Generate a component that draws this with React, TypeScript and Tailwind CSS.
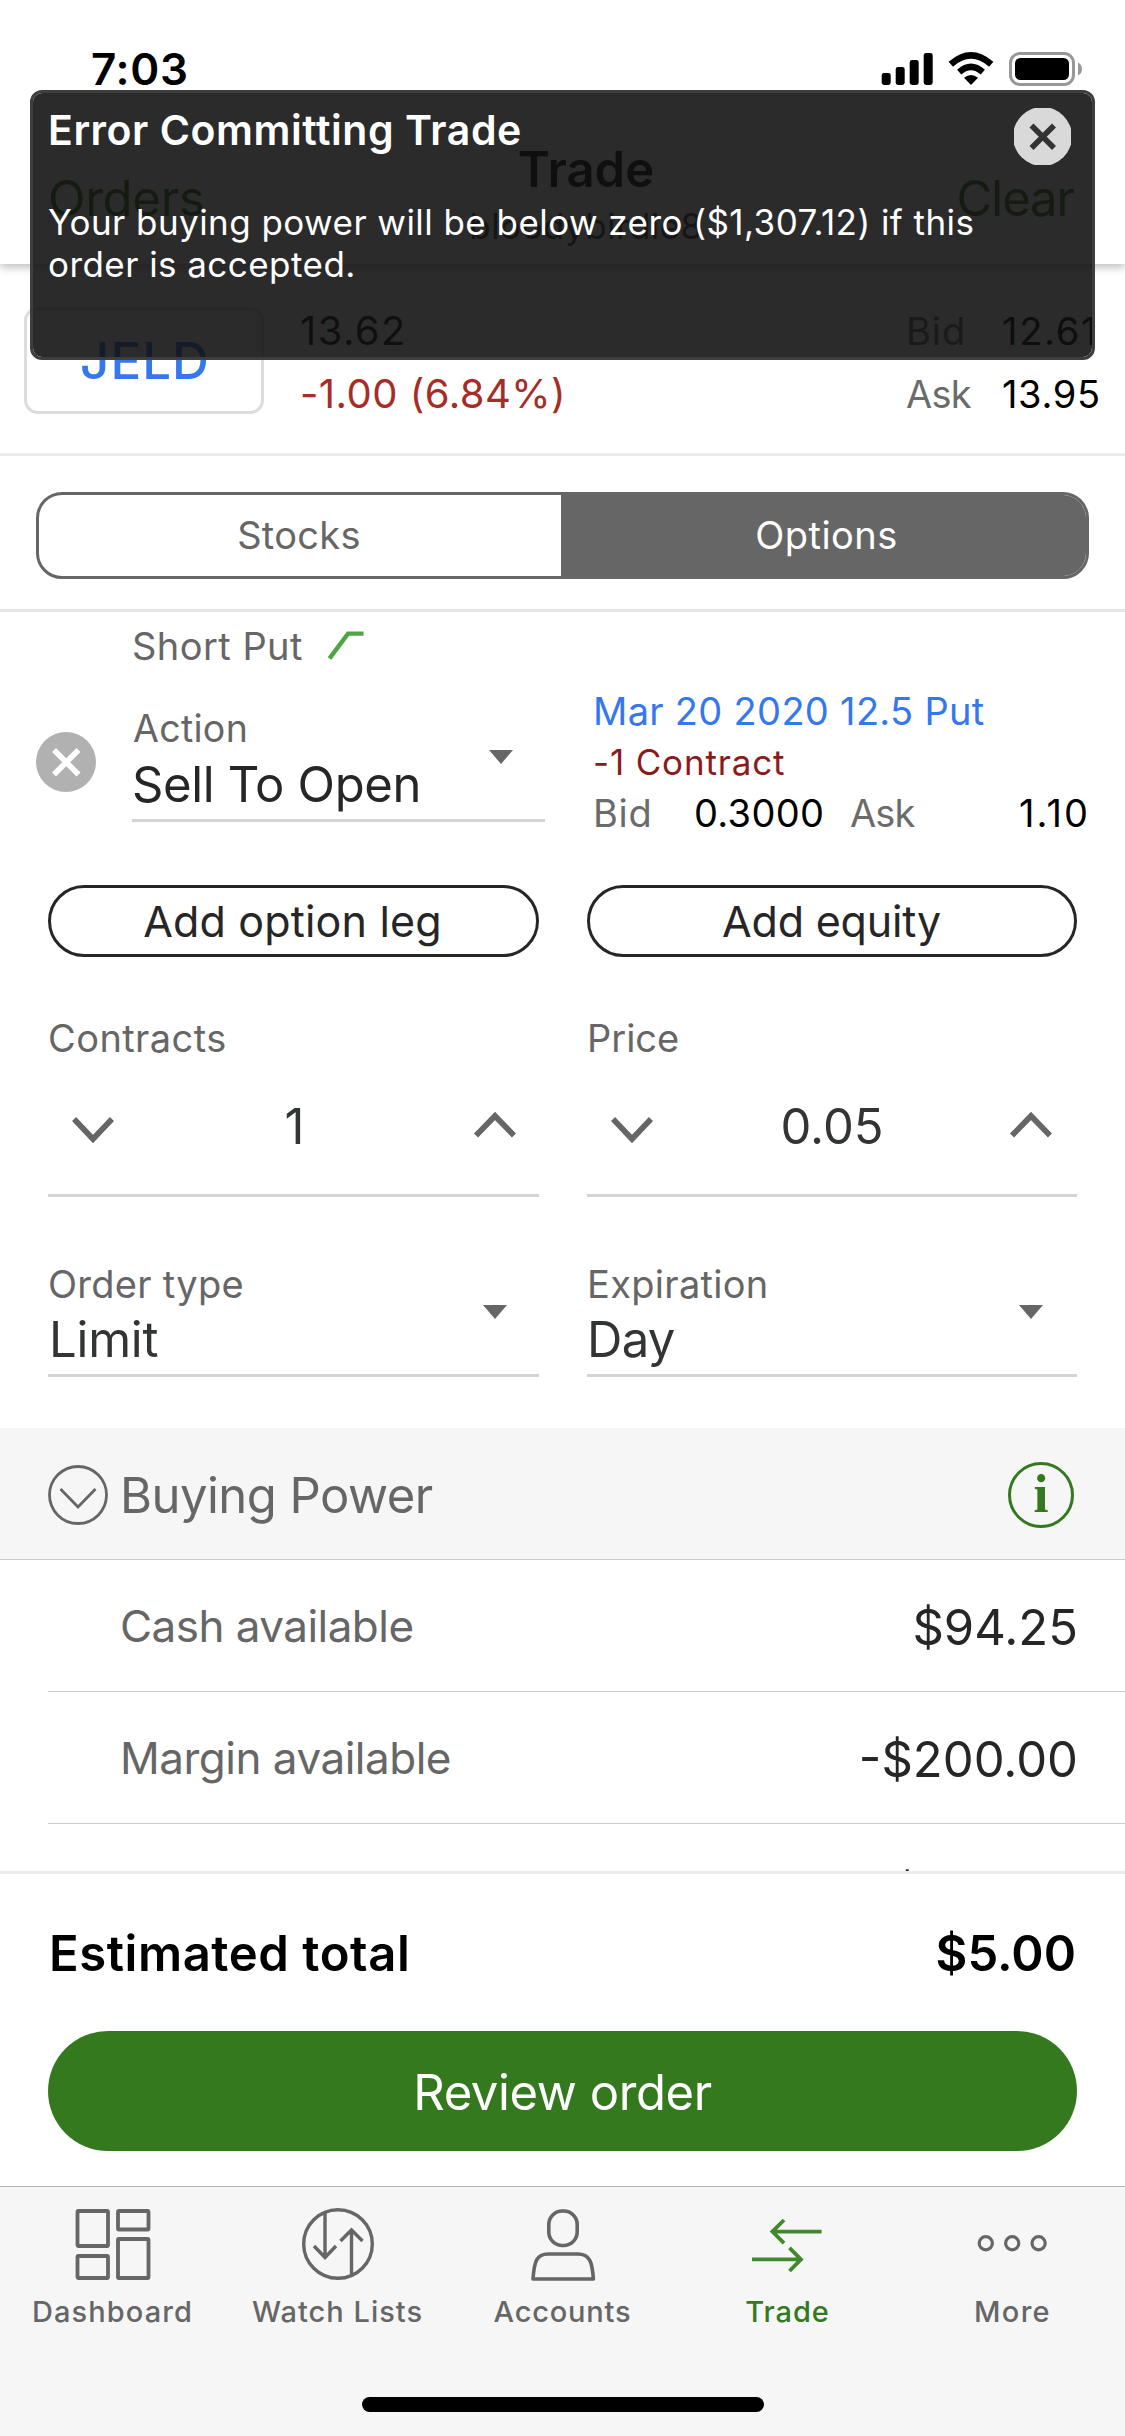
import type { ReactNode } from 'react';

function StatusIcons() {
  return (
    <svg width="202" height="36" viewBox="881 51 202 36" className="mt-[51px]">
      <rect x="881.7" y="73" width="9" height="12" rx="2.4" />
      <rect x="895.7" y="67" width="9" height="18" rx="2.4" />
      <rect x="909.7" y="60" width="9" height="25" rx="2.4" />
      <rect x="923.7" y="53" width="9" height="32" rx="2.4" />
      <path d="M971 85 L964 77.8 Q971 72.2 978 77.8 Z" />
      <path d="M959.2 72.2 Q971 61.5 982.8 72.2" fill="none" stroke="black" strokeWidth="6.4" />
      <path d="M950.8 64.2 Q971 46.6 991.2 64.2" fill="none" stroke="black" strokeWidth="6.6" />
      <rect x="1010.5" y="53.5" width="63" height="31" rx="9.5" fill="none" stroke="#989898" strokeWidth="3" />
      <rect x="1015" y="58" width="54" height="22" rx="5.5" />
      <path d="M1078 62.5 Q1082 64.5 1082 69 Q1082 73.5 1078 75.5 Z" fill="#989898" />
    </svg>
  );
}

function Header() {
  return (
    <header className="relative z-10 flex h-[264px] flex-col bg-white shadow-[0_3px_9px_rgba(0,0,0,0.28)]">
      <div className="flex h-[132px] justify-between pl-[91px] pr-[42px]">
        <span className="mt-[47px] text-[44px] font-semibold leading-none tracking-[0.015em] text-black">7:03</span>
        <StatusIcons />
      </div>
      <div className="flex justify-between pl-[48px] pr-[51px]">
        <span className="mt-[42px] w-[259px] text-[49px] leading-none tracking-[-0.005em] text-[#35791f]">Orders</span>
        <div className="mt-[13px] flex flex-col items-center leading-none">
          <span className="text-[49px] font-semibold text-[#111]">Trade</span>
          <span className="mt-[15px] text-[35px] tracking-[0.012em] text-[#444]">bloodybirdie8</span>
        </div>
        <span className="mt-[42px] w-[209px] text-right text-[49px] leading-none tracking-[-0.0215em] text-[#35791f]">
          Clear
        </span>
      </div>
    </header>
  );
}

function Quote() {
  return (
    <section className="flex h-[192px] items-start border-b-[3px] border-[#ebebeb] pl-[24px] leading-none">
      <button className="mt-[43px] flex h-[107px] w-[240px] justify-center rounded-[14px] border-[3px] border-[#dcdcdc] pl-[2px] pt-[25px] text-[51px] font-medium leading-none tracking-[0.02em] text-[#3577ee]">
        JELD
      </button>
      <div className="ml-[36px] mt-[47px] flex flex-1 flex-col gap-[23px] text-[40px]">
        <span className="tracking-[0.035em] text-[#111]">13.62</span>
        <span className="tracking-[0.0116em] text-[#a82c26]">-1.00 (6.84%)</span>
      </div>
      <div className="mt-[48px] grid w-[219px] grid-cols-[96px_1fr] gap-y-[25px] text-[38px]">
        <span className="tracking-[0.025em] text-[#6b6b6b]">Bid</span>
        <span className="tracking-[0.045em] text-black">12.61</span>
        <span className="tracking-[-0.02em] text-[#6b6b6b]">Ask</span>
        <span className="tracking-[0.0176em] text-black">13.95</span>
      </div>
    </section>
  );
}

function Segmented() {
  return (
    <section className="h-[156px] border-b-[3px] border-[#e6e6e6] px-[36px] pt-[36px]">
      <div className="flex h-[87px] overflow-hidden rounded-[26px] border-[3px] border-[#666] text-[38px]">
        <button className="w-[522px] pr-[2px] tracking-[0.008em] text-[#666]">Stocks</button>
        <button className="flex-1 bg-[#666] pl-[6px] tracking-[0.012em] text-white">Options</button>
      </div>
    </section>
  );
}

function Caret() {
  return (
    <svg width="24" height="14" viewBox="0 0 24 14" className="mt-[40px] shrink-0" fill="#666">
      <path d="M0 0H24L12 14Z" />
    </svg>
  );
}

function SelectField({ label, value, className }: { label: ReactNode; value: ReactNode; className: string }) {
  return (
    <div className={`flex h-[112px] justify-between border-b-[3px] border-[#d4d4d4] leading-none ${className}`}>
      <div className="flex flex-col gap-[12px]">
        {label}
        {value}
      </div>
      <Caret />
    </div>
  );
}

function OptionLeg() {
  return (
    <div className="flex items-start pl-[36px] leading-none">
      <svg width="60" height="60" viewBox="0 0 60 60" className="mt-[40px]">
        <circle cx="30" cy="30" r="30" fill="#b1b1b1" />
        <path d="M18 18L42.5 42.5M42.5 18L18 42.5" stroke="white" strokeWidth="5.6" />
      </svg>
      <SelectField
        className="ml-[36px] mt-[18px] w-[413px] pr-[32px]"
        label={<span className="ml-[1px] h-[38px] text-[37.5px] leading-none tracking-[0.008em] text-[#666]">Action</span>}
        value={<span className="text-[49px] leading-none tracking-[-0.0075em] text-[#262626]">Sell To Open</span>}
      />
      <div className="ml-[48px] flex w-[520px] flex-col">
        <span className="text-[38px] leading-none tracking-[0.008em] text-[#3577ee]">Mar 20 2020 12.5 Put</span>
        <span className="mt-[15px] text-[35px] leading-none tracking-[0.024em] text-[#8b1a1a]">-1 Contract</span>
        <div className="mt-[14px] flex text-[38px] leading-none">
          <span className="w-[101px] tracking-[0.019em] text-[#6b6b6b]">Bid</span>
          <span className="w-[156px] tracking-[0.0087em] text-black">0.3000</span>
          <span className="w-[169px] tracking-[-0.025em] text-[#6b6b6b]">Ask</span>
          <span className="tracking-[0.056em] text-black">1.10</span>
        </div>
      </div>
    </div>
  );
}

function Stepper({ value, className }: { value: string; className: string }) {
  return (
    <div className={`flex h-[140px] items-center justify-between border-b-[3px] border-[#d4d4d4] pl-[24px] ${className}`}>
      <svg width="42" height="49" viewBox="0 0 42 49" fill="none" stroke="#666" strokeWidth="5.8">
        <path d="M2 18L21 38L40 18" />
      </svg>
      <span className="pl-[1px] pt-[2px] text-[49px] leading-none text-[#333436]">{value}</span>
      <svg width="42" height="49" viewBox="0 0 42 49" fill="none" stroke="#666" strokeWidth="5.8">
        <path d="M2 34.5L21 15L40 34.5" />
      </svg>
    </div>
  );
}

function OrderForm() {
  return (
    <div className="grid grid-cols-[491px_490px] gap-x-[48px] px-[48px] pt-[53px] leading-none">
      <button className="h-[72px] rounded-full border-[3px] border-[#262626] pr-[2px] text-[43px] leading-none tracking-[0.004em] text-[#262626]">
        Add option leg
      </button>
      <button className="h-[72px] rounded-full border-[3px] border-[#262626] pr-[1px] text-[43px] leading-none tracking-[-0.004em] text-[#262626]">
        Add equity
      </button>

      <span className="mt-[62px] text-[38px] tracking-[0.011em] text-[#666]">Contracts</span>
      <span className="mt-[62px] text-[38px] text-[#666]">Price</span>
      <Stepper value="1" className="pr-[23px]" />
      <Stepper value="0.05" className="pr-[25px]" />

      <SelectField
        className="mt-[68px] pr-[32px]"
        label={<span className="text-[38px] leading-none tracking-[0.0075em] text-[#666]">Order type</span>}
        value={<span className="ml-[1px] text-[49px] leading-none tracking-[-0.0044em] text-[#333436]">Limit</span>}
      />
      <SelectField
        className="mt-[68px] pr-[34px]"
        label={<span className="text-[38px] leading-none tracking-[0.008em] text-[#666]">Expiration</span>}
        value={<span className="text-[49px] leading-none tracking-[-0.015em] text-[#333436]">Day</span>}
      />
    </div>
  );
}

function BalanceRow({ label, value, tracking }: { label: string; value: string; tracking: string }) {
  return (
    <div className="ml-[48px] flex h-[132px] items-center justify-between border-b border-[#cbcbcb] pl-[72px] pr-[47px] leading-none">
      <span className={`text-[44px] text-[#666] ${tracking}`}>{label}</span>
      <span className="pt-[4px] text-[49px] text-[#262626]">{value}</span>
    </div>
  );
}

function BuyingPower() {
  return (
    <section className="mt-[51px]">
      <div className="flex h-[132px] items-center border-b border-[#cbcbcb] bg-[#f6f6f6] pl-[48px] pr-[51px]">
        <svg width="60" height="60" viewBox="0 0 60 60" className="mt-[2px]" fill="none" stroke="#666" strokeWidth="2.8">
          <circle cx="30" cy="30" r="28.5" />
          <path d="M12.5 24L30 42L47.5 24" />
        </svg>
        <span className="ml-[12px] flex-1 pt-[3px] text-[49px] leading-none tracking-[-0.0108em] text-[#666]">Buying Power</span>
        <span className="mt-[2px] flex h-[66px] w-[66px] justify-center rounded-full border-[3px] border-[#35791f] pt-[2px] font-['Liberation_Serif',serif] text-[54px] font-bold leading-none text-[#35791f]">
          i
        </span>
      </div>
      <BalanceRow label="Cash available" value="$94.25" tracking="tracking-[-0.0122em]" />
      <BalanceRow label="Margin available" value="-$200.00" tracking="tracking-[-0.0112em]" />
      <div className="flex h-[132px] items-center justify-end pr-[202px] pt-[4px] text-[49px] leading-none text-[#262626]">$</div>
    </section>
  );
}

function Footer() {
  return (
    <section className="h-[315px] border-t-[3px] border-[#ebebeb] px-[48px] pt-[55px]">
      <div className="flex justify-between pl-[1px] pr-[1px] text-[49px] font-semibold leading-none text-black">
        <span className="tracking-[0.0115em]">Estimated total</span>
        <span>$5.00</span>
      </div>
      <button className="mt-[53px] h-[120px] w-full rounded-full bg-[#35791f] pt-[2px] text-[49px] leading-none tracking-[-0.0083em] text-white">
        Review order
      </button>
    </section>
  );
}

const tabs = [
  {
    label: 'Dashboard',
    color: 'text-[#666]',
    tracking: 'tracking-[0.038em]',
    icon: (
      <g strokeWidth="3.8" strokeLinejoin="round">
        <rect x="9.5" y="11" width="30.5" height="35" rx="1" />
        <rect x="50" y="11" width="30.5" height="18.5" rx="1" />
        <rect x="9.5" y="56" width="30.5" height="22" rx="1" />
        <rect x="50" y="39" width="30.5" height="39" rx="1" />
      </g>
    ),
  },
  {
    label: 'Watch Lists',
    color: 'text-[#666]',
    tracking: 'tracking-[0.035em]',
    icon: (
      <g strokeWidth="3.4">
        <circle cx="45" cy="44" r="34.3" />
        <path d="M32 12V56M21 46L32 57.5L43 46M58.5 76V31M47.5 41L58.5 30L69.5 41" />
      </g>
    ),
  },
  {
    label: 'Accounts',
    color: 'text-[#666]',
    tracking: 'tracking-[0.028em]',
    icon: (
      <g strokeWidth="3.6" strokeLinejoin="round">
        <rect x="30.8" y="11" width="28.4" height="34.5" rx="13.5" />
        <path d="M15 79C16.2 62 18.2 54 30.2 54H59.8C71.8 54 74.2 62 75.4 79Z" />
      </g>
    ),
  },
  {
    label: 'Trade',
    color: 'text-[#35791f]',
    tracking: 'tracking-[0.032em]',
    icon: (
      <g strokeWidth="3.8" stroke="#42892d">
        <path d="M78.6 31.6H29M41 20L29.4 31.6L41 43.2M9 59.4H59M46.5 47.8L58 59.4L46.5 71" />
      </g>
    ),
  },
  {
    label: 'More',
    color: 'text-[#666]',
    tracking: 'tracking-[0.044em]',
    icon: (
      <g strokeWidth="3.2">
        <circle cx="17.8" cy="43.2" r="6.6" />
        <circle cx="44.2" cy="43.2" r="6.6" />
        <circle cx="70.6" cy="43.2" r="6.6" />
      </g>
    ),
  },
];

function TabBar() {
  return (
    <nav className="h-[250px] border-t border-[#b2b2b2] bg-[#f6f6f6]">
      <div className="grid grid-cols-5">
        {tabs.map((tab) => (
          <div key={tab.label} className={`flex flex-col items-center pt-[13px] ${tab.color}`}>
            <svg width="90" height="90" viewBox="0 0 90 90" fill="none" stroke="currentColor">
              {tab.icon}
            </svg>
            <span className={`mt-[7px] text-[29px] font-medium leading-none ${tab.tracking}`}>{tab.label}</span>
          </div>
        ))}
      </div>
      <div className="mx-auto mt-[71px] h-[15px] w-[402px] rounded-full bg-black" />
    </nav>
  );
}

function ErrorToast() {
  return (
    <div className="absolute left-[30px] top-[90px] z-20 flex h-[270px] w-[1065px] items-start justify-between rounded-[12px] border-[3px] border-[#3e3e3e] bg-[rgba(16,16,16,0.885)] bg-clip-padding pl-[15px] pr-[21px] text-white">
      <div>
        <h1 className="mt-[17px] text-[41px] font-semibold leading-none tracking-[0.0135em]">Error Committing Trade</h1>
        <p className="mt-[50px] whitespace-nowrap text-[35px] leading-[42px] tracking-[0.0128em]">
          Your buying power will be below zero ($1,307.12) if this
          <br />
          order is accepted.
        </p>
      </div>
      <svg width="57" height="57" viewBox="0 0 57 57" className="mt-[15px] shrink-0">
        <circle cx="28.5" cy="28.5" r="29.5" fill="#d9d9d9" />
        <path d="M17.5 17.5L40 40M40 17.5L17.5 40" stroke="#333" strokeWidth="5.6" />
      </svg>
    </div>
  );
}

export default function App() {
  return (
    <div className="relative flex h-[2436px] w-[1125px] flex-col overflow-hidden bg-white font-['Inter',sans-serif]">
      <Header />
      <Quote />
      <Segmented />
      <main className="h-[1259px] overflow-hidden">
        <div className="flex items-start pl-[132px] pt-[15px] leading-none">
          <span className="text-[38px] leading-none tracking-[0.012em] text-[#666]">Short Put</span>
          <svg width="36" height="30" viewBox="0 0 36 30" className="ml-[25px] mt-[4px]" fill="none" stroke="#4fa443" strokeWidth="4.4">
            <path d="M1.5 27.5L20 2.6H35.5" />
          </svg>
        </div>
        <div className="mt-[27px]">
          <OptionLeg />
        </div>
        <OrderForm />
        <BuyingPower />
      </main>
      <Footer />
      <TabBar />
      <ErrorToast />
    </div>
  );
}
